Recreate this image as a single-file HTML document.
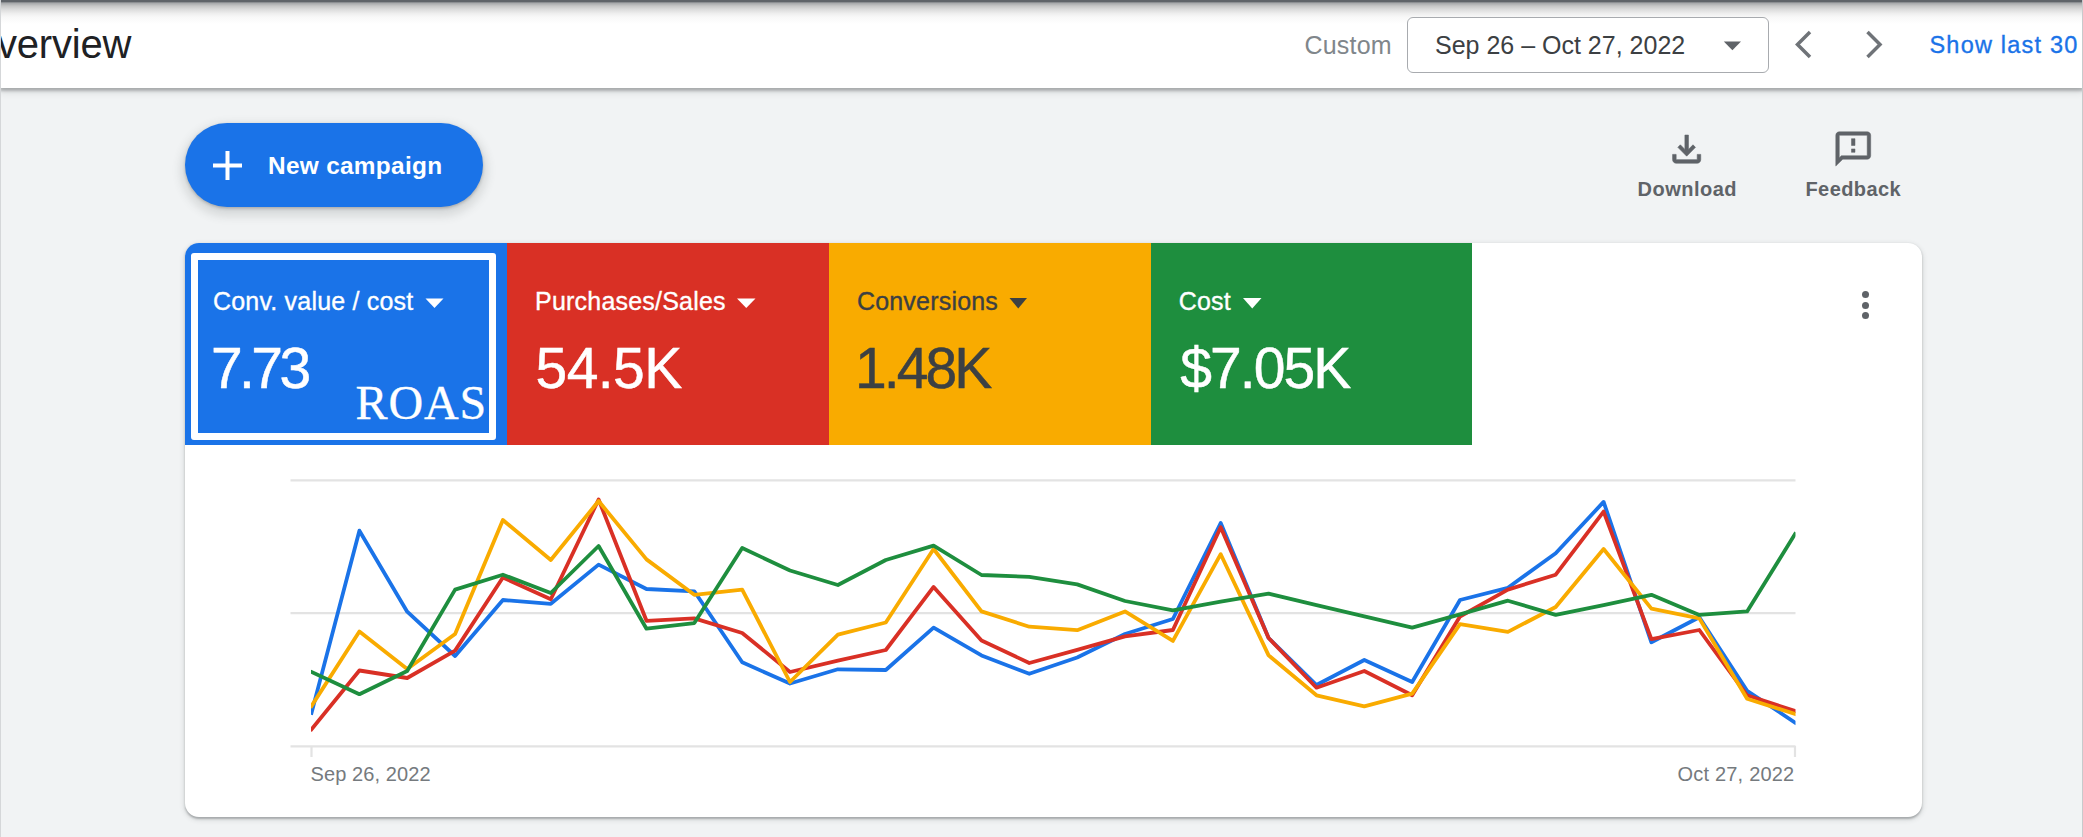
<!DOCTYPE html>
<html><head><meta charset="utf-8">
<style>
html,body{margin:0;padding:0;}
body{width:2083px;height:837px;overflow:hidden;background:#f1f3f4;position:relative;font-family:"Liberation Sans",sans-serif;}
.a{position:absolute;white-space:nowrap;line-height:1;}
#hdr{position:absolute;left:0;top:0;width:2083px;height:88px;background:#fff;box-shadow:0 2.5px 2.5px rgba(60,64,67,.3),0 4px 7px rgba(60,64,67,.14);}
#topsh{position:absolute;left:0;top:0;width:2083px;height:24px;background:linear-gradient(to bottom,#5f6368 0px,#5f6368 1.6px,#a4a6a8 3px,#c6c6c6 6px,#dcdcdc 9.6px,#eeeeee 13.4px,#f8f8f8 17px,rgba(255,255,255,0) 24px);}
#card{position:absolute;left:185px;top:242.5px;width:1736.5px;height:574px;background:#fff;border-radius:14px;overflow:hidden;box-shadow:0 1.5px 2px rgba(60,64,67,.32),0 2px 5px 1px rgba(60,64,67,.15);}
.tile{position:absolute;top:0;width:321.8px;height:202px;}
.tt{position:absolute;left:28px;top:46px;font-size:25px;line-height:1;white-space:nowrap;letter-spacing:.2px;-webkit-text-stroke:.35px currentColor;}
.tv{position:absolute;left:27.5px;top:97px;font-size:57px;line-height:1;white-space:nowrap;-webkit-text-stroke:.5px currentColor;}
</style></head><body>
<div id="hdr"></div>
<div id="topsh"></div>
<div class="a" style="left:-3px;top:24px;font-size:40px;color:#202124;letter-spacing:-.2px;">verview</div>
<div class="a" style="left:1304.5px;top:33px;font-size:25px;color:#80868b;letter-spacing:.2px;">Custom</div>
<div style="position:absolute;left:1406.5px;top:17px;width:360px;height:53.8px;border:1.5px solid #a8abaf;border-radius:6px;background:#fff;"></div>
<div class="a" style="left:1435px;top:33px;font-size:25px;color:#3c4043;">Sep 26 – Oct 27, 2022</div>
<svg style="position:absolute;left:0;top:0" width="2083" height="837">
 <path d="M1723.8 41.5 L1741.0 41.5 L1732.3999999999999 50.3 Z" fill="#5f6368"/>
 <path d="M1810 32 L1797.5 44.5 L1810 57" fill="none" stroke="#6f7378" stroke-width="3.5"/>
 <path d="M1867.5 32 L1880 44.5 L1867.5 57" fill="none" stroke="#6f7378" stroke-width="3.5"/>
</svg>
<div class="a" style="left:1929.5px;top:34.4px;font-size:23.5px;color:#1a73e8;letter-spacing:1.2px;-webkit-text-stroke:.35px #1a73e8;">Show last 30</div>
<div style="position:absolute;left:0;top:0;width:1.2px;height:837px;background:#d5d7d9;"></div>
<div style="position:absolute;left:2081.5px;top:0;width:1.5px;height:837px;background:#c8cacc;"></div>

<div style="position:absolute;left:185px;top:123px;width:298px;height:83.5px;border-radius:42px;background:#1a73e8;box-shadow:0 1.5px 3px rgba(60,64,67,.3),0 5px 10px 4px rgba(60,64,67,.15);"></div>
<svg style="position:absolute;left:0;top:0" width="2083" height="837">
 <path d="M213 165.5 H242 M227.5 151 V180" stroke="#fff" stroke-width="4" fill="none"/>
</svg>
<div class="a" style="left:268px;top:153.5px;font-size:24.4px;font-weight:700;color:#fff;letter-spacing:.3px;">New campaign</div>

<svg style="position:absolute;left:0;top:0" width="2083" height="837">
 <path transform="translate(1665.6,170.2) scale(0.0439)" fill="#5f6368" stroke="#5f6368" stroke-width="14" stroke-linejoin="round" d="M480-320 280-520l56-58 104 104v-326h80v326l104-104 56 58-200 200ZM240-160q-33 0-56.5-23.5T160-240v-120h80v120h480v-120h80v120q0 33-23.5 56.5T720-160H240Z"/>
 <path transform="translate(1832.3,128.4) scale(1.745,1.71)" fill="#5f6368" stroke="#5f6368" stroke-width=".3" stroke-linejoin="round" d="M20 2H4c-1.1 0-1.99.9-1.99 2L2 22l4-4h14c1.1 0 2-.9 2-2V4c0-1.1-.9-2-2-2zm0 14H5.17l-.59.59-.58.58V4h16v12zm-9-4h2v2h-2zm0-6h2v4h-2z"/>
</svg>
<div class="a" style="left:1637.5px;top:179px;font-size:20px;font-weight:700;color:#5f6368;letter-spacing:.5px;">Download</div>
<div class="a" style="left:1805.5px;top:179px;font-size:20px;font-weight:700;color:#5f6368;letter-spacing:.4px;">Feedback</div>

<div id="card">
 <div class="tile" style="left:0;width:322.3px;background:#1a73e8;color:#fff;">
  <div style="position:absolute;left:5.5px;top:10.5px;border:7px solid #fff;border-radius:3px;box-sizing:border-box;width:305.5px;height:186.5px;"></div>
  <div class="tt">Conv. value / cost</div>
  <div class="tv" style="letter-spacing:-3.6px;left:26px;">7.73</div>
  <div class="a" style="left:170.5px;top:136px;font-family:'Liberation Serif',serif;font-size:48px;letter-spacing:.9px;-webkit-text-stroke:.3px #fff;">ROAS</div>
 </div>
 <div class="tile" style="left:322.1px;background:#d93025;color:#fff;">
  <div class="tt">Purchases/Sales</div>
  <div class="tv" style="letter-spacing:-.6px;left:28.5px;">54.5K</div>
 </div>
 <div class="tile" style="left:643.9px;background:#f9ab00;color:#3c4043;">
  <div class="tt">Conversions</div>
  <div class="tv" style="letter-spacing:-2.9px;left:26px;">1.48K</div>
 </div>
 <div class="tile" style="left:965.7px;background:#1e8e3e;color:#fff;">
  <div class="tt">Cost</div>
  <div class="tv" style="letter-spacing:-1.9px;left:29.5px;">$7.05K</div>
 </div>
 <div style="position:absolute;left:1677.3px;top:48.5px;width:7px;height:7px;border-radius:50%;background:#5f6368;"></div>
 <div style="position:absolute;left:1677.3px;top:59.2px;width:7px;height:7px;border-radius:50%;background:#5f6368;"></div>
 <div style="position:absolute;left:1677.3px;top:69.8px;width:7px;height:7px;border-radius:50%;background:#5f6368;"></div>
</div>

<svg style="position:absolute;left:0;top:0" width="2083" height="837">
 <path d="M425.5 298.5 L443.5 298.5 L434.5 308.0 Z" fill="#fff"/>
 <path d="M737 298.5 L755.5 298.5 L746.25 308.0 Z" fill="#fff"/>
 <path d="M1009.5 298 L1027.0 298 L1018.25 308.5 Z" fill="#3c4043"/>
 <path d="M1243 298 L1261.5 298 L1252.25 308.5 Z" fill="#fff"/>
 <g stroke="#e3e3e3" stroke-width="2.2">
  <path d="M290.5 480.4 H1795.5 M290.5 613.1 H1795.5 M290.5 746.3 H1795.5"/>
  <path d="M311.5 746 V757 M1795 746 V757"/>
 </g>
 <defs><clipPath id="cl"><rect x="311" y="470" width="1484.5" height="280"/></clipPath></defs>
 <g fill="none" stroke-width="3.8" stroke-linejoin="round" stroke-linecap="square" clip-path="url(#cl)">
  <path d="M311.5 713.0 L359.4 530.7 L407.2 611.7 L455.1 656.0 L502.9 600.0 L550.8 603.8 L598.6 564.6 L646.5 589.0 L694.3 591.3 L742.2 662.3 L790.0 683.5 L837.9 669.3 L885.8 670.0 L933.6 627.7 L981.5 655.4 L1029.3 673.8 L1077.2 657.5 L1125.0 634.0 L1172.9 619.0 L1220.7 523.0 L1268.6 638.0 L1316.5 685.0 L1364.3 660.0 L1412.2 682.0 L1460.0 600.0 L1507.9 587.8 L1555.7 553.2 L1603.6 501.9 L1651.4 642.3 L1699.3 617.3 L1747.1 690.8 L1795.0 722.5" stroke="#1a73e8"/>
  <path d="M311.5 729.3 L359.4 670.5 L407.2 678.0 L455.1 650.6 L502.9 577.5 L550.8 599.3 L598.6 499.5 L646.5 620.8 L694.3 618.4 L742.2 633.0 L790.0 672.0 L837.9 660.6 L885.8 650.0 L933.6 586.9 L981.5 640.5 L1029.3 663.0 L1077.2 649.8 L1125.0 636.4 L1172.9 630.0 L1220.7 527.2 L1268.6 638.0 L1316.5 687.7 L1364.3 671.0 L1412.2 695.3 L1460.0 616.5 L1507.9 589.6 L1555.7 574.7 L1603.6 511.6 L1651.4 639.2 L1699.3 630.0 L1747.1 695.3 L1795.0 711.0" stroke="#d93025"/>
  <path d="M311.5 706.0 L359.4 631.5 L407.2 669.0 L455.1 634.0 L502.9 520.0 L550.8 560.0 L598.6 501.0 L646.5 559.4 L694.3 594.8 L742.2 589.6 L790.0 682.0 L837.9 634.6 L885.8 622.5 L933.6 549.0 L981.5 611.4 L1029.3 626.7 L1077.2 630.2 L1125.0 611.4 L1172.9 640.9 L1220.7 554.2 L1268.6 655.4 L1316.5 695.3 L1364.3 706.4 L1412.2 693.6 L1460.0 624.2 L1507.9 631.9 L1555.7 607.0 L1603.6 549.0 L1651.4 608.6 L1699.3 618.4 L1747.1 698.8 L1795.0 714.0" stroke="#f9ab00"/>
  <path d="M311.5 672.0 L359.4 694.2 L407.2 671.0 L455.1 589.6 L502.9 574.7 L550.8 593.0 L598.6 546.0 L646.5 628.7 L694.3 623.1 L742.2 548.0 L790.0 570.5 L837.9 585.0 L885.8 560.0 L933.6 545.6 L981.5 575.0 L1029.3 576.8 L1077.2 584.4 L1125.0 601.0 L1172.9 610.4 L1220.7 601.7 L1268.6 593.7 L1316.5 605.2 L1364.3 616.3 L1412.2 627.7 L1460.0 614.3 L1507.9 600.7 L1555.7 614.9 L1603.6 605.2 L1651.4 594.8 L1699.3 614.9 L1747.1 611.4 L1795.0 534.1" stroke="#1e8e3e"/>
 </g>
</svg>
<div class="a" style="left:310.5px;top:764px;font-size:20px;color:#757a7e;letter-spacing:.1px;">Sep 26, 2022</div>
<div class="a" style="left:1677.5px;top:764px;font-size:20px;color:#757a7e;letter-spacing:.2px;">Oct 27, 2022</div>
</body></html>
